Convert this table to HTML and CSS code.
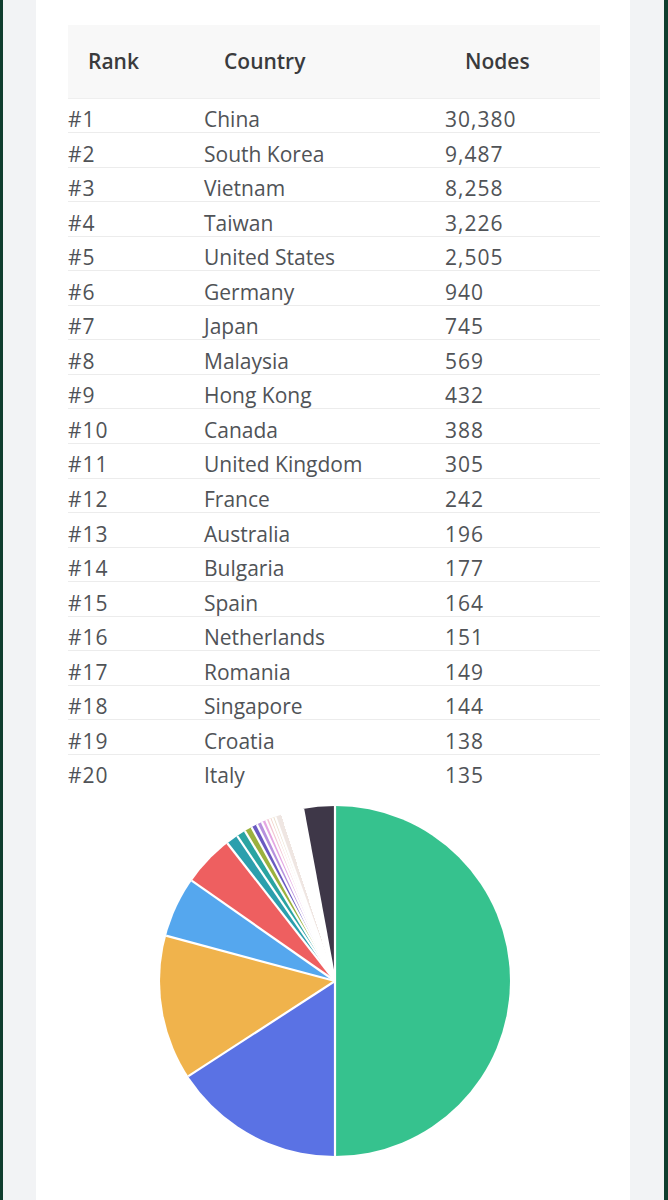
FILE: index.html
```html
<!DOCTYPE html>
<html lang="en">
<head>
<meta charset="utf-8">
<title>Nodes by Country</title>
<link rel="stylesheet" href="styles.css">
</head>
<body>
<div class="frame">
  <main class="card">
    <table class="nodes">
      <colgroup><col class="c-rank"><col class="c-country"><col class="c-nodes"></colgroup>
      <thead>
        <tr><th>Rank</th><th>Country</th><th>Nodes</th></tr>
      </thead>
      <tbody>
        <tr><td>#1</td><td>China</td><td>30,380</td></tr>
        <tr><td>#2</td><td>South Korea</td><td>9,487</td></tr>
        <tr><td>#3</td><td>Vietnam</td><td>8,258</td></tr>
        <tr><td>#4</td><td>Taiwan</td><td>3,226</td></tr>
        <tr><td>#5</td><td>United States</td><td>2,505</td></tr>
        <tr><td>#6</td><td>Germany</td><td>940</td></tr>
        <tr><td>#7</td><td>Japan</td><td>745</td></tr>
        <tr><td>#8</td><td>Malaysia</td><td>569</td></tr>
        <tr><td>#9</td><td>Hong Kong</td><td>432</td></tr>
        <tr><td>#10</td><td>Canada</td><td>388</td></tr>
        <tr><td>#11</td><td>United Kingdom</td><td>305</td></tr>
        <tr><td>#12</td><td>France</td><td>242</td></tr>
        <tr><td>#13</td><td>Australia</td><td>196</td></tr>
        <tr><td>#14</td><td>Bulgaria</td><td>177</td></tr>
        <tr><td>#15</td><td>Spain</td><td>164</td></tr>
        <tr><td>#16</td><td>Netherlands</td><td>151</td></tr>
        <tr><td>#17</td><td>Romania</td><td>149</td></tr>
        <tr><td>#18</td><td>Singapore</td><td>144</td></tr>
        <tr><td>#19</td><td>Croatia</td><td>138</td></tr>
        <tr><td>#20</td><td>Italy</td><td>135</td></tr>
      </tbody>
    </table>

    <div class="pie">
      <svg class="pie-lines" viewBox="0 0 350 350" width="350" height="350">
        <g stroke="#ffffff" stroke-width="2.2" stroke-linecap="butt">
          <line x1="175" y1="175" x2="175" y2="-3" transform="rotate(0 175 175)"/>
          <line x1="175" y1="175" x2="175" y2="-3" transform="rotate(180 175 175)"/>
          <line x1="175" y1="175" x2="175" y2="-3" transform="rotate(237 175 175)"/>
          <line x1="175" y1="175" x2="175" y2="-3" transform="rotate(285 175 175)"/>
          <line x1="175" y1="175" x2="175" y2="-3" transform="rotate(305 175 175)"/>
          <line x1="175" y1="175" x2="175" y2="-3" transform="rotate(322 175 175)"/>
          <line x1="175" y1="175" x2="175" y2="-3" transform="rotate(326 175 175)"/>
          <line x1="175" y1="175" x2="175" y2="-3" transform="rotate(329 175 175)"/>
          <line x1="175" y1="175" x2="175" y2="-3" transform="rotate(331.5 175 175)"/>
          <line x1="175" y1="175" x2="175" y2="-3" transform="rotate(333.5 175 175)"/>
          <line x1="175" y1="175" x2="175" y2="-3" transform="rotate(335.3 175 175)"/>
          <line x1="175" y1="175" x2="175" y2="-3" transform="rotate(336.8 175 175)"/>
          <line x1="175" y1="175" x2="175" y2="-3" transform="rotate(338 175 175)"/>
          <line x1="175" y1="175" x2="175" y2="-3" transform="rotate(339 175 175)"/>
          <line x1="175" y1="175" x2="175" y2="-3" transform="rotate(340 175 175)"/>
          <line x1="175" y1="175" x2="175" y2="-3" transform="rotate(349.5 175 175)"/>
        </g>
      </svg>
    </div>
  </main>
</div>
</body>
</html>
```

FILE: styles.css
```css
* { box-sizing: border-box; }

html, body {
  margin: 0;
  padding: 0;
  background: #0f3d2e;
}

.frame {
  display: flex;
  min-height: 1200px;
  background: #f2f3f5;
  border-left: 3px solid #0f3d2e;
  border-right: 4px solid #0f3d2e;
  padding: 0 34px 0 33px;
}

.card {
  flex: 1;
  background: #ffffff;
  padding: 25px 30px 0 32px;
  font-family: "Open Sans", "Noto Sans", "Liberation Sans", sans-serif;
}

.nodes {
  width: 100%;
  border-collapse: collapse;
  table-layout: fixed;
}

.c-rank { width: 136px; }
.c-country { width: 241px; }
.c-nodes { width: 155px; }

.nodes thead th {
  background: #f8f8f8;
  height: 73px;
  padding: 0 0 0 20px;
  text-align: left;
  font-weight: 600;
  font-size: 21px;
  color: #3a3b3d;
  border-bottom: 1px solid #efefef;
}

.nodes tbody td {
  height: 34.55px;
  padding: 7.5px 0 0 0;
  font-size: 21px;
  line-height: 26px;
  color: #505357;
  border-bottom: 1px solid #ececec;
  vertical-align: top;
  white-space: nowrap;
}

.nodes tbody td:first-child,
.nodes tbody td:last-child {
  letter-spacing: 1px;
}

.nodes tbody tr:last-child td {
  border-bottom: none;
}

.pie {
  width: 350px;
  height: 350px;
  margin: 17px 0 0 92px;
  border-radius: 50%;
  overflow: hidden;
  background: conic-gradient(
    #36c28e 0deg 180deg,
    #5a72e4 180deg 237deg,
    #f0b34c 237deg 285deg,
    #55a7ee 285deg 305deg,
    #ee5f60 305deg 322deg,
    #2b9fad 322deg 326deg,
    #2aa4a2 326deg 329deg,
    #9bb13e 329deg 331.5deg,
    #6a5ac2 331.5deg 333.5deg,
    #b790dd 333.5deg 335.3deg,
    #e4a6e2 335.3deg 336.8deg,
    #f2c4d2 336.8deg 338deg,
    #f0cfc4 338deg 339deg,
    #e9dcc8 339deg 340deg,
    #efe6e2 340deg 342deg,
    #ffffff 342deg 349.5deg,
    #3e3748 349.5deg 360deg
  );
}

.pie-lines {
  display: block;
  width: 100%;
  height: 100%;
}
```
